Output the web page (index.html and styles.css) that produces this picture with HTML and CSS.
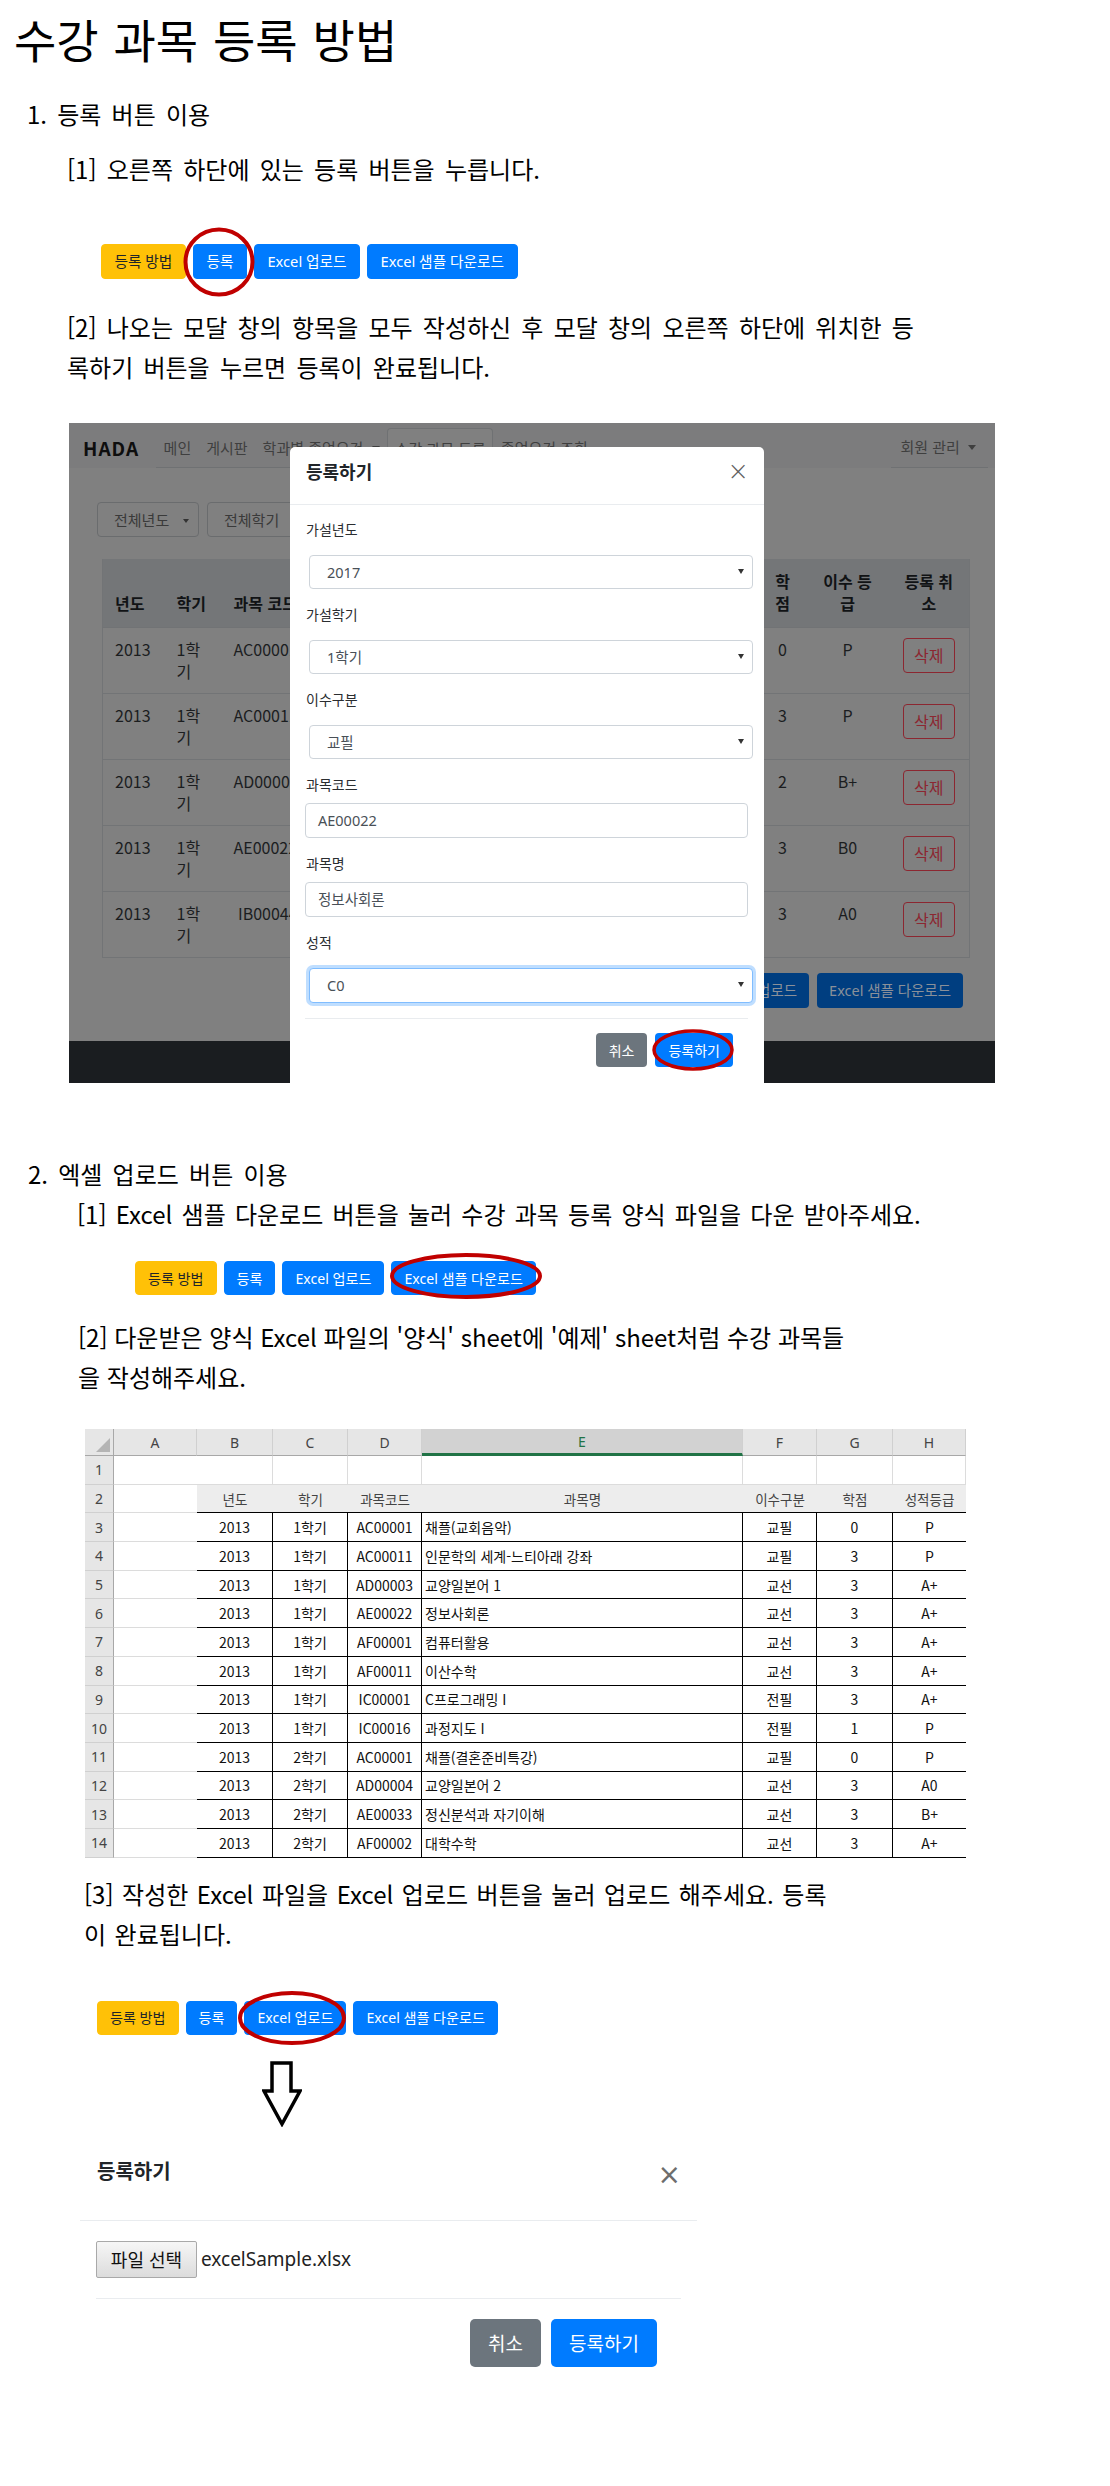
FILE: index.html
```html
<!DOCTYPE html>
<html lang="ko">
<head>
<meta charset="utf-8">
<title>수강 과목 등록 방법</title>
<link rel="stylesheet" href="styles.css">
</head>
<body>
<main class="page">
  <h1 class="title">수강 과목 등록 방법</h1>

  <h2 class="sec-head sh1">1. 등록 버튼 이용</h2>
  <p class="step s1-p1">[1] 오른쪽 하단에 있는 등록 버튼을 누릅니다.</p>
  <div class="btnrow row1">
    <span class="btn btn-warn">등록 방법</span>
    <span class="btn btn-blue">등록</span>
    <span class="btn btn-blue">Excel 업로드</span>
    <span class="btn btn-blue">Excel 샘플 다운로드</span>
    <svg class="mark mark1" width="72" height="70" viewBox="0 0 72 70"><ellipse cx="36" cy="35" rx="33.5" ry="32.5" fill="none" stroke="#c00000" stroke-width="4"/></svg>
  </div>
  <p class="step s1-p2">[2] 나오는 모달 창의 항목을 모두 작성하신 후 모달 창의 오른쪽 하단에 위치한 등<br>록하기 버튼을 누르면 등록이 완료됩니다.</p>

  <div class="shot">
    <div class="s-nav">
      <span class="s-brand">HADA</span>
      <div class="s-tabs">
        <span class="s-tab">메인</span>
        <span class="s-tab">게시판</span>
        <span class="s-tab">학과별 졸업요건 <i class="caret"></i></span>
        <span class="s-tab active">수강 과목 등록</span>
        <span class="s-tab">졸업요건 조회</span>
      </div>
      <div class="s-user">회원 관리 <i class="caret"></i></div>
    </div>
    <div class="s-filter">
      <span class="s-fbtn">전체년도 <i class="caret"></i></span>
      <span class="s-fbtn">전체학기</span>
    </div>
    <table class="s-table">
      <colgroup><col class="c1"><col class="c2"><col class="c3"><col class="c4"><col class="c5"><col class="c6"><col class="c7"><col class="c8"></colgroup>
      <thead>
        <tr><th>년도</th><th>학기</th><th class="clip">과목 코드</th><th></th><th></th><th class="ctr">학점</th><th class="ctr">이수 등급</th><th class="ctr">등록 취소</th></tr>
      </thead>
      <tbody>
        <tr><td>2013</td><td>1학기</td><td class="clip">AC00001</td><td></td><td></td><td class="ctr">0</td><td class="ctr">P</td><td class="ctr"><span class="s-del">삭제</span></td></tr>
        <tr><td>2013</td><td>1학기</td><td class="clip">AC00011</td><td></td><td></td><td class="ctr">3</td><td class="ctr">P</td><td class="ctr"><span class="s-del">삭제</span></td></tr>
        <tr><td>2013</td><td>1학기</td><td class="clip">AD00003</td><td></td><td></td><td class="ctr">2</td><td class="ctr">B+</td><td class="ctr"><span class="s-del">삭제</span></td></tr>
        <tr><td>2013</td><td>1학기</td><td class="clip">AE00022</td><td></td><td></td><td class="ctr">3</td><td class="ctr">B0</td><td class="ctr"><span class="s-del">삭제</span></td></tr>
        <tr><td>2013</td><td>1학기</td><td class="clip">&nbsp;IB00044</td><td></td><td></td><td class="ctr">3</td><td class="ctr">A0</td><td class="ctr"><span class="s-del">삭제</span></td></tr>
      </tbody>
    </table>
    <div class="s-btns">
      <span class="s-btn">Excel 업로드</span>
      <span class="s-btn">Excel 샘플 다운로드</span>
    </div>
    <div class="s-footer"></div>

    <div class="s-modal">
      <div class="m-head">
        <span class="m-title">등록하기</span>
        <span class="m-close">×</span>
      </div>
      <div class="m-body">
        <div class="fg"><label>가설년도</label><div class="m-sel">2017<i class="tri"></i></div></div>
        <div class="fg"><label>가설학기</label><div class="m-sel">1학기<i class="tri"></i></div></div>
        <div class="fg"><label>이수구분</label><div class="m-sel">교필<i class="tri"></i></div></div>
        <div class="fg txt"><label>과목코드</label><div class="m-inp">AE00022</div></div>
        <div class="fg txt"><label>과목명</label><div class="m-inp">정보사회론</div></div>
        <div class="fg"><label>성적</label><div class="m-sel focus">C0<i class="tri"></i></div></div>
      </div>
      <div class="m-foot">
        <span class="m-btn gray">취소</span>
        <span class="m-btn blue">등록하기</span>
      </div>
    </div>
    <svg class="mark mark-shot" width="82" height="42" viewBox="0 0 82 42"><ellipse cx="41" cy="21" rx="39" ry="19" fill="none" stroke="#c00000" stroke-width="3.5"/></svg>
  </div>

  <h2 class="sec-head sh2">2. 엑셀 업로드 버튼 이용</h2>
  <p class="step s2-p1">[1] Excel 샘플 다운로드 버튼을 눌러 수강 과목 등록 양식 파일을 다운 받아주세요.</p>
  <div class="btnrow small row2">
    <span class="btn btn-warn">등록 방법</span>
    <span class="btn btn-blue">등록</span>
    <span class="btn btn-blue">Excel 업로드</span>
    <span class="btn btn-blue">Excel 샘플 다운로드</span>
    <svg class="mark mark2" width="152" height="46" viewBox="0 0 152 46"><ellipse cx="76" cy="23" rx="74" ry="21" fill="none" stroke="#c00000" stroke-width="4"/></svg>
  </div>
  <p class="step s2-p2">[2] 다운받은 양식 Excel 파일의 '양식' sheet에 '예제' sheet처럼 수강 과목들<br>을 작성해주세요.</p>

  <div class="xl">
    <div class="x-corner"></div><div class="x-col">A</div><div class="x-col">B</div><div class="x-col">C</div><div class="x-col">D</div><div class="x-col sel">E</div><div class="x-col">F</div><div class="x-col">G</div><div class="x-col">H</div>

    <div class="x-rn">1</div><div class="x-a"></div><div class="x-e"></div><div class="x-e"></div><div class="x-e"></div><div class="x-e"></div><div class="x-e"></div><div class="x-e"></div><div class="x-e"></div>

    <div class="x-rn">2</div><div class="x-a"></div><div class="x-h">년도</div><div class="x-h">학기</div><div class="x-h">과목코드</div><div class="x-h">과목명</div><div class="x-h">이수구분</div><div class="x-h">학점</div><div class="x-h">성적등급</div>

    <div class="x-rn">3</div><div class="x-a"></div><div class="x-d">2013</div><div class="x-d">1학기</div><div class="x-d">AC00001</div><div class="x-d l">채플(교회음악)</div><div class="x-d">교필</div><div class="x-d">0</div><div class="x-d last">P</div>
    <div class="x-rn">4</div><div class="x-a"></div><div class="x-d">2013</div><div class="x-d">1학기</div><div class="x-d">AC00011</div><div class="x-d l">인문학의 세계-느티아래 강좌</div><div class="x-d">교필</div><div class="x-d">3</div><div class="x-d last">P</div>
    <div class="x-rn">5</div><div class="x-a"></div><div class="x-d">2013</div><div class="x-d">1학기</div><div class="x-d">AD00003</div><div class="x-d l">교양일본어 1</div><div class="x-d">교선</div><div class="x-d">3</div><div class="x-d last">A+</div>
    <div class="x-rn">6</div><div class="x-a"></div><div class="x-d">2013</div><div class="x-d">1학기</div><div class="x-d">AE00022</div><div class="x-d l">정보사회론</div><div class="x-d">교선</div><div class="x-d">3</div><div class="x-d last">A+</div>
    <div class="x-rn">7</div><div class="x-a"></div><div class="x-d">2013</div><div class="x-d">1학기</div><div class="x-d">AF00001</div><div class="x-d l">컴퓨터활용</div><div class="x-d">교선</div><div class="x-d">3</div><div class="x-d last">A+</div>
    <div class="x-rn">8</div><div class="x-a"></div><div class="x-d">2013</div><div class="x-d">1학기</div><div class="x-d">AF00011</div><div class="x-d l">이산수학</div><div class="x-d">교선</div><div class="x-d">3</div><div class="x-d last">A+</div>
    <div class="x-rn">9</div><div class="x-a"></div><div class="x-d">2013</div><div class="x-d">1학기</div><div class="x-d">IC00001</div><div class="x-d l">C프로그래밍 I</div><div class="x-d">전필</div><div class="x-d">3</div><div class="x-d last">A+</div>
    <div class="x-rn">10</div><div class="x-a"></div><div class="x-d">2013</div><div class="x-d">1학기</div><div class="x-d">IC00016</div><div class="x-d l">과정지도 I</div><div class="x-d">전필</div><div class="x-d">1</div><div class="x-d last">P</div>
    <div class="x-rn">11</div><div class="x-a"></div><div class="x-d">2013</div><div class="x-d">2학기</div><div class="x-d">AC00001</div><div class="x-d l">채플(결혼준비특강)</div><div class="x-d">교필</div><div class="x-d">0</div><div class="x-d last">P</div>
    <div class="x-rn">12</div><div class="x-a"></div><div class="x-d">2013</div><div class="x-d">2학기</div><div class="x-d">AD00004</div><div class="x-d l">교양일본어 2</div><div class="x-d">교선</div><div class="x-d">3</div><div class="x-d last">A0</div>
    <div class="x-rn">13</div><div class="x-a"></div><div class="x-d">2013</div><div class="x-d">2학기</div><div class="x-d">AE00033</div><div class="x-d l">정신분석과 자기이해</div><div class="x-d">교선</div><div class="x-d">3</div><div class="x-d last">B+</div>
    <div class="x-rn">14</div><div class="x-a"></div><div class="x-d">2013</div><div class="x-d">2학기</div><div class="x-d">AF00002</div><div class="x-d l">대학수학</div><div class="x-d">교선</div><div class="x-d">3</div><div class="x-d last">A+</div>
  </div>

  <p class="step s3-p">[3] 작성한 Excel 파일을 Excel 업로드 버튼을 눌러 업로드 해주세요. 등록<br>이 완료됩니다.</p>
  <div class="btnrow small row3">
    <span class="btn btn-warn">등록 방법</span>
    <span class="btn btn-blue">등록</span>
    <span class="btn btn-blue">Excel 업로드</span>
    <span class="btn btn-blue">Excel 샘플 다운로드</span>
    <svg class="mark mark3" width="108" height="54" viewBox="0 0 108 54"><ellipse cx="54" cy="27" rx="52" ry="25" fill="none" stroke="#c00000" stroke-width="4"/></svg>
  </div>

  <svg class="arrow" width="40" height="66" viewBox="0 0 40 66"><path d="M10 2 H29 V30 H38 L20 63 L2 30 H10 Z" fill="#fff" stroke="#000" stroke-width="3.5" stroke-linejoin="miter"/></svg>

  <div class="snip">
    <div class="sn-head">
      <span class="sn-title">등록하기</span>
      <span class="sn-close">×</span>
    </div>
    <div class="sn-body">
      <span class="sn-file">파일 선택</span>
      <span class="sn-name">excelSample.xlsx</span>
    </div>
    <div class="sn-foot">
      <span class="sn-btn gray">취소</span>
      <span class="sn-btn blue">등록하기</span>
    </div>
  </div>
</main>
</body>
</html>
```

FILE: styles.css
```css
* { box-sizing: border-box; }
html, body { margin: 0; padding: 0; background: #fff; }
body {
  width: 1110px;
  min-height: 2486px;
  font-family: "Noto Sans CJK KR", "Noto Sans", sans-serif;
  color: #000;
}
.page {
  display: flex;
  flex-direction: column;
  align-items: flex-start;
  padding-bottom: 100px;
}

/* ---------- text ---------- */
.title {
  margin: 8px 0 0 14px;
  font-size: 46px;
  line-height: 60px;
  font-weight: 400;
  word-spacing: 2px;
}
.sec-head {
  margin: 0;
  font-size: 24px;
  line-height: 40px;
  font-weight: 400;
  word-spacing: 3.5px;
}
.step {
  margin: 0;
  font-size: 24px;
  line-height: 40px;
  white-space: nowrap;
  word-spacing: 3.5px;
}
.sh1 { margin-top: 26px; margin-left: 27px; }
.s1-p1 { margin-top: 15px; margin-left: 67px; }
.s1-p2 { margin-top: 28px; margin-left: 67px; }
.sh2 { margin-top: 71px; margin-left: 28px; }
.s2-p1 { margin-top: 0; margin-left: 77px; word-spacing: 2.5px; }
.s2-p2 { margin-top: 22px; margin-left: 78px; word-spacing: 0; }
.s3-p { margin-top: 16px; margin-left: 84px; word-spacing: 1.8px; }

/* ---------- button rows ---------- */
.btnrow {
  position: relative;
  display: flex;
  gap: 7px;
  font-family: "Noto Sans", "Noto Sans CJK KR", sans-serif;
}
.row1 { margin-top: 55px; margin-left: 101px; }
.row2 { margin-top: 27px; margin-left: 135px; }
.row3 { margin-top: 47px; margin-left: 97px; }
.btn {
  display: block;
  font-size: 14.7px;
  line-height: 21px;
  padding: 6px 12.5px;
  border: 1px solid transparent;
  border-radius: 4px;
  white-space: nowrap;
}
.btnrow.small .btn {
  font-size: 14.1px;
  padding: 5.5px 12px;
}
.btn-warn { background: #ffc107; border-color: #ffc107; color: #212529; }
.btn-blue { background: #007bff; border-color: #007bff; color: #fff; }

.mark { position: absolute; pointer-events: none; }
.mark1 { left: 82px; top: -17px; }
.mark2 { left: 255px; top: -8px; }
.mark3 { left: 141px; top: -10px; }

/* ---------- screenshot of the page with modal ---------- */
.shot {
  position: relative;
  margin-top: 36px;
  margin-left: 69px;
  width: 926px;
  height: 660px;
  overflow: hidden;
  background: #808080;
  display: flex;
  flex-direction: column;
  font-family: "Noto Sans CJK KR", "Noto Sans", sans-serif;
}
.s-nav {
  display: flex;
  align-items: flex-end;
  height: 45px;
  background: #7c7c7d;
  padding-right: 7px;
}
.s-brand {
  align-self: center;
  margin-left: 14px;
  font-size: 19px;
  font-weight: 600;
  letter-spacing: 1px;
  color: #0e0e0e;
  line-height: 44px;
  margin-top: 4px;
}
.s-tabs {
  display: flex;
  align-items: flex-end;
  margin-left: 17px;
  height: 40px;
  border-bottom: 1px solid #6f7173;
}
.s-tab {
  display: block;
  padding: 0 6.5px;
  font-size: 15px;
  line-height: 38px;
  color: #3f3f3f;
  white-space: nowrap;
  border: 1px solid transparent;
  border-bottom: 0;
}
.s-tab.active {
  border-color: #6f7173;
  border-radius: 4px 4px 0 0;
  background: #808080;
  margin-bottom: -1px;
  line-height: 39px;
}
.caret {
  display: inline-block;
  width: 0;
  height: 0;
  margin-left: 4px;
  vertical-align: 3px;
  border-left: 4px solid transparent;
  border-right: 4px solid transparent;
  border-top: 5px solid #3f3f3f;
}
.s-user {
  margin-left: auto;
  height: 40px;
  padding: 0 12px 0 9px;
  font-size: 15px;
  line-height: 38px;
  color: #3f3f3f;
  border-bottom: 1px solid #6f7173;
}
.s-filter {
  display: flex;
  gap: 8px;
  margin-top: 34px;
  margin-left: 28px;
}
.s-fbtn {
  display: block;
  flex: none;
  width: 102px;
  height: 35px;
  padding-left: 16px;
  font-size: 15px;
  line-height: 33px;
  color: #3a3a3a;
  border: 1px solid #6a6c6e;
  border-radius: 4px;
  white-space: nowrap;
}
.s-fbtn .caret { margin-left: 10px; border-width: 4px 3px 0 3px; border-top-color: #333; }
.s-table {
  margin-top: 22px;
  margin-left: 33px;
  width: 867px;
  table-layout: fixed;
  border-collapse: collapse;
  font-size: 16px;
  line-height: 22px;
  color: #1b1d1f;
}
.s-table .c1 { width: 62px; }
.s-table .c2 { width: 57px; }
.s-table .c3 { width: 69px; }
.s-table .c4 { width: 379px; }
.s-table .c5 { width: 89px; }
.s-table .c6 { width: 48px; }
.s-table .c7 { width: 82px; }
.s-table .c8 { width: 81px; }
.s-table th {
  height: 68px;
  padding: 0 12px 13px;
  vertical-align: bottom;
  text-align: left;
  background: #747678;
  font-weight: 700;
  color: #111315;
  border: 1px solid #717375;
  border-width: 0 0 1px 0;
}
.s-table td {
  height: 66px;
  padding: 10px 12px 0;
  vertical-align: top;
  text-align: left;
  border-top: 1px solid #727476;
}
.s-table .clip {
  padding-right: 0;
  white-space: nowrap;
  overflow: visible;
}
.s-table tr > :first-child { border-left: 1px solid #727476; }
.s-table tr > :last-child { border-right: 1px solid #727476; }
.s-table tbody tr:last-child td { border-bottom: 1px solid #727476; }
.s-table .ctr { text-align: center; padding-left: 6px; padding-right: 6px; }
.s-table th.ctr { padding-left: 12px; padding-right: 12px; }
.s-del {
  display: inline-block;
  width: 52px;
  height: 35px;
  line-height: 33px;
  border: 1px solid #8c2731;
  border-radius: 4px;
  color: #8c2731;
  font-size: 16px;
  text-align: center;
}
.s-btns {
  display: flex;
  justify-content: flex-end;
  gap: 8px;
  margin-top: 15px;
  padding-right: 32px;
}
.s-btn {
  display: block;
  padding: 0 12px;
  height: 35px;
  line-height: 35px;
  font-size: 14.5px;
  font-family: "Noto Sans", "Noto Sans CJK KR", sans-serif;
  color: #8a9099;
  background: #003e80;
  border-radius: 4px;
  white-space: nowrap;
}
.s-footer {
  margin-top: auto;
  height: 42px;
  background: #1a1d20;
}

/* modal inside the screenshot */
.s-modal {
  position: absolute;
  left: 221px;
  top: 24px;
  width: 474px;
  bottom: -20px;
  background: #fff;
  border-radius: 5px;
  color: #212529;
}
.m-head {
  position: relative;
  height: 58px;
  padding: 12px 16px 0;
  border-bottom: 1px solid #e9ecef;
}
.m-title {
  font-size: 18px;
  line-height: 24px;
  font-weight: 700;
}
.m-close {
  position: absolute;
  right: 15px;
  top: 9px;
  font-size: 26px;
  line-height: 30px;
  color: #5f5f5f;
  font-family: "DejaVu Sans", sans-serif;
  font-weight: 300;
}
.m-body { padding: 14px 0 0 16px; }
.fg { margin-bottom: 15px; }
.fg label {
  display: block;
  height: 20px;
  font-size: 14px;
  line-height: 20px;
  margin-bottom: 16px;
  color: #2a2d30;
}
.fg.txt label { margin-bottom: 9px; }
.m-sel, .m-inp {
  position: relative;
  border: 1px solid #ced4da;
  border-radius: 4px;
  background: #fff;
  font-size: 14.5px;
  color: #495057;
  font-family: "Noto Sans", "Noto Sans CJK KR", sans-serif;
}
.m-sel {
  margin-left: 3px;
  width: 444px;
  height: 34px;
  line-height: 32px;
  padding-left: 17px;
}
.m-inp {
  margin-left: -1px;
  width: 443px;
  height: 35px;
  line-height: 33px;
  padding-left: 12px;
}
.m-sel.focus {
  border-color: #80bdff;
  box-shadow: 0 0 0 3px rgba(0, 123, 255, 0.25);
  height: 35px;
}
.tri {
  position: absolute;
  right: 8px;
  top: 13px;
  width: 0;
  height: 0;
  border-left: 3px solid transparent;
  border-right: 3px solid transparent;
  border-top: 5px solid #333;
}
.m-foot {
  display: flex;
  justify-content: flex-end;
  gap: 8px;
  margin: 0 16px 0 15px;
  padding: 14px 15px 0 0;
  border-top: 1px solid #e9ecef;
}
.m-btn {
  display: block;
  height: 34px;
  padding: 0 13px;
  font-size: 14px;
  line-height: 34px;
  color: #fff;
  border-radius: 4px;
}
.m-btn.gray { background: #6c757d; }
.m-btn.blue { background: #007bff; }
.mark-shot { left: 583px; top: 606px; }

/* ---------- excel sheet ---------- */
.xl {
  margin-top: 32px;
  margin-left: 85px;
  display: grid;
  grid-template-columns: 29px 83px 76px 75px 74px 321px 74px 76px 73px;
  grid-template-rows: 27px repeat(14, 28.7px);
  font-size: 14px;
  font-family: "Noto Sans CJK KR", "Noto Sans", sans-serif;
  color: #111;
}
.xl > div {
  display: flex;
  align-items: center;
  justify-content: center;
  white-space: nowrap;
  overflow: hidden;
}
.x-corner {
  position: relative;
  background: #e6e6e6;
  border-right: 1px solid #a8a8a8;
  border-bottom: 1px solid #a8a8a8;
}
.x-corner::after {
  content: "";
  position: absolute;
  right: 3px;
  bottom: 3px;
  width: 0;
  height: 0;
  border-left: 14px solid transparent;
  border-bottom: 14px solid #b4b4b4;
}
.x-col {
  background: #e6e6e6;
  color: #444;
  border-right: 1px solid #d0d0d0;
  border-bottom: 1px solid #a8a8a8;
  font-family: "Noto Sans", sans-serif;
}
.x-col.sel {
  background: #d2d2d2;
  color: #217346;
  border-bottom: 3px solid #217346;
}
.x-rn {
  background: #e6e6e6;
  color: #444;
  border-right: 1px solid #a8a8a8;
  border-bottom: 1px solid #d0d0d0;
  font-family: "Noto Sans", sans-serif;
}
.x-a { border-bottom: 1px solid #dcdcdc; }
.x-e {
  border-right: 1px solid #dcdcdc;
  border-bottom: 1px solid #dcdcdc;
}
.x-h {
  background: #ededed;
  color: #444;
  border-bottom: 1px solid #000;
  font-size: 13.5px;
}
.x-d {
  border-right: 1px solid #000;
  border-bottom: 1px solid #000;
}
.x-d.l { justify-content: flex-start; padding-left: 3px; }
.x-d.last { border-right: 0; }

/* ---------- arrow ---------- */
.arrow { margin-top: 26px; margin-left: 262px; }

/* ---------- upload modal snippet ---------- */
.snip {
  margin-top: 14px;
  margin-left: 80px;
  width: 617px;
  color: #212529;
}
.sn-head {
  position: relative;
  height: 80px;
  padding: 15px 16px 0 17px;
  border-bottom: 1px solid #e9ecef;
}
.sn-title {
  font-size: 20px;
  line-height: 30px;
  font-weight: 700;
}
.sn-close {
  position: absolute;
  right: 16px;
  top: 18px;
  font-size: 28px;
  line-height: 32px;
  color: #6d6d6d;
  font-family: "DejaVu Sans", sans-serif;
}
.sn-body {
  display: flex;
  align-items: center;
  gap: 4px;
  padding: 20px 0 20px 16px;
}
.sn-file {
  display: block;
  height: 37px;
  width: 101px;
  text-align: center;
  font-size: 18px;
  line-height: 35px;
  color: #111;
  background: linear-gradient(#f6f6f6, #dcdcdc);
  border: 1px solid #a9a9a9;
  border-radius: 2px;
}
.sn-name {
  font-family: "Noto Sans", sans-serif;
  font-size: 19px;
  color: #222;
}
.sn-foot {
  display: flex;
  justify-content: flex-end;
  gap: 10px;
  margin: 0 16px;
  padding: 20px 24px 0 0;
  border-top: 1px solid #e9ecef;
}
.sn-btn {
  display: block;
  height: 48px;
  padding: 0 18px;
  font-size: 19px;
  line-height: 48px;
  color: #fff;
  border-radius: 5px;
}
.sn-btn.gray { background: #6c757d; }
.sn-btn.blue { background: #007bff; }
```
